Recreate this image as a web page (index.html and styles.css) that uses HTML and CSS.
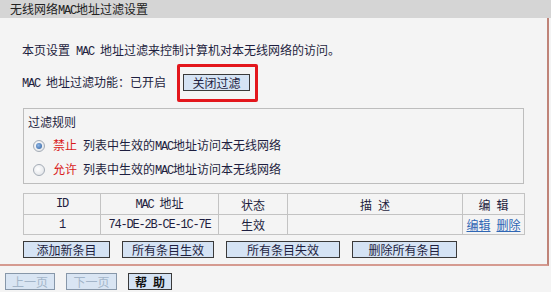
FILE: index.html
```html
<!DOCTYPE html>
<html lang="zh-CN">
<head>
<meta charset="utf-8">
<title>无线网络MAC地址过滤设置</title>
<link rel="stylesheet" href="styles.css">
</head>
<body>
<div class="title">无线网络<span class="en">MAC</span>地址过滤设置</div>
<div class="content">
  <p class="intro">本页设置<span class="en"> MAC </span>地址过滤来控制计算机对本无线网络的访问。</p>
  <div class="status">
    <span class="label"><span class="en">MAC </span>地址过滤功能：已开启</span>
    <span class="mark"><button class="btn btn-close">关闭过滤</button></span>
  </div>
  <div class="rules">
    <div class="rules-title">过滤规则</div>
    <div class="rule"><span class="radio checked"></span><span class="red">禁止</span><span class="en sp"> </span>列表中生效的<span class="en">MAC</span>地址访问本无线网络</div>
    <div class="rule"><span class="radio"></span><span class="red">允许</span><span class="en sp"> </span>列表中生效的<span class="en">MAC</span>地址访问本无线网络</div>
  </div>
  <table class="list">
    <colgroup>
      <col class="c-id"><col class="c-mac"><col class="c-state"><col class="c-desc"><col class="c-edit">
    </colgroup>
    <tr class="head">
      <td class="en">ID</td>
      <td><span class="en">MAC </span>地址</td>
      <td>状态</td>
      <td>描<span class="en sp"> </span>述</td>
      <td>编<span class="en sp"> </span>辑</td>
    </tr>
    <tr class="row">
      <td class="en">1</td>
      <td class="en">74-DE-2B-CE-1C-7E</td>
      <td>生效</td>
      <td></td>
      <td><a class="link" href="#">编辑</a><span class="en sp"> </span><a class="link" href="#">删除</a></td>
    </tr>
  </table>
  <div class="actions">
    <button class="btn btn-add">添加新条目</button>
    <button class="btn btn-on">所有条目生效</button>
    <button class="btn btn-off">所有条目失效</button>
    <button class="btn btn-del">删除所有条目</button>
  </div>
</div>
<div class="footer">
  <button class="btn btn-prev" disabled>上一页</button>
  <button class="btn btn-next" disabled>下一页</button>
  <button class="btn btn-help">帮<span class="en sp"> </span>助</button>
</div>
</body>
</html>
```

FILE: styles.css
```css
* { box-sizing: border-box; }
html, body {
  margin: 0;
  padding: 0;
}
body {
  width: 551px;
  height: 292px;
  overflow: hidden;
  background: #f4f4f4;
  font-family: "Noto Sans CJK SC", "Liberation Sans", sans-serif;
  font-size: 12px;
  color: #1e1e40;
}
.en {
  font-family: "Liberation Mono", "Noto Sans CJK SC", monospace;
  font-size: 12px;
  letter-spacing: -1.2px;
}
.sp {
  display: inline-block;
  width: 6px;
  letter-spacing: 0;
}
.title {
  height: 18px;
  background: #d5d5d5;
  padding: 1px 0 0 10px;
  line-height: 15px;
  color: #222;
}
.content {
  width: 549px;
  border-right: 2px solid #bf8378;
  border-bottom: 2px solid #d59a90;
  padding: 24px 0 6px 22px;
}
.intro {
  margin: 0;
  line-height: 16px;
  height: 16px;
}
.status {
  margin-top: 16px;
  height: 17px;
  display: flex;
  align-items: center;
}
.label {
  line-height: 17px;
  white-space: pre;
}
.mark {
  position: relative;
  margin-left: 17px;
  display: inline-flex;
}
.mark::after {
  content: "";
  position: absolute;
  top: -10px;
  bottom: -11px;
  left: -6px;
  right: -8px;
  border: 3px solid #e3161c;
  border-radius: 2px;
}
.btn {
  font-family: "Noto Sans CJK SC", sans-serif;
  font-size: 12px;
  height: 17px;
  line-height: 15px;
  padding: 0;
  margin: 0;
  border: 1px solid #3a3a3a;
  background: #d5e3f4;
  color: #1e1e40;
  border-radius: 0;
}
.btn-close { width: 67px; }
.rules {
  margin: 17px 0 0 1px;
  width: 501px;
  height: 76px;
  border: 1px solid #bdbdbd;
  padding: 5px 4px;
}
.rules-title {
  line-height: 16px;
  height: 16px;
}
.rule {
  margin-top: 6px;
  height: 18px;
  line-height: 18px;
  white-space: nowrap;
}
.radio {
  display: inline-block;
  vertical-align: -2px;
  width: 12px;
  height: 12px;
  margin: 0 8px 0 5px;
  border-radius: 50%;
  border: 1px solid #a4acb6;
  background: radial-gradient(circle at 40% 40%, #ffffff, #dcdfe4);
  position: relative;
}
.radio.checked::after {
  content: "";
  position: absolute;
  left: 2px;
  top: 2px;
  width: 6px;
  height: 6px;
  border-radius: 50%;
  background: radial-gradient(circle at 40% 40%, #8fb6e6, #2b5d9c);
}
.red { color: #d91a1a; }
.list {
  margin: 9px 0 0 1px;
  width: 501px;
  border-collapse: collapse;
  table-layout: fixed;
}
.list td {
  border: 1px solid #c3c3c3;
  text-align: center;
  padding: 0;
  white-space: nowrap;
}
.c-id { width: 77px; }
.c-mac { width: 118px; }
.c-state { width: 69px; }
.c-desc { width: 175px; }
.c-edit { width: 62px; }
.head td { height: 19px; line-height: 17px; }
.row td { height: 20px; line-height: 18px; }
.link {
  color: #2f66b4;
  text-decoration: underline;
}
.actions {
  margin: 6px 0 0 1px;
  display: flex;
  gap: 12px;
}
.btn-add { width: 87px; }
.btn-on { width: 92px; }
.btn-off { width: 114px; }
.btn-del { width: 105px; }
.footer {
  padding: 7px 5px;
  display: flex;
  gap: 11px;
}
.btn-prev, .btn-next {
  border-color: #8797a9;
  color: #a3b5c9;
  background: #d9e5f3;
}
.btn-prev { width: 50px; }
.btn-next { width: 51px; }
.btn-help {
  width: 44px;
  font-weight: bold;
  color: #111;
}
```
